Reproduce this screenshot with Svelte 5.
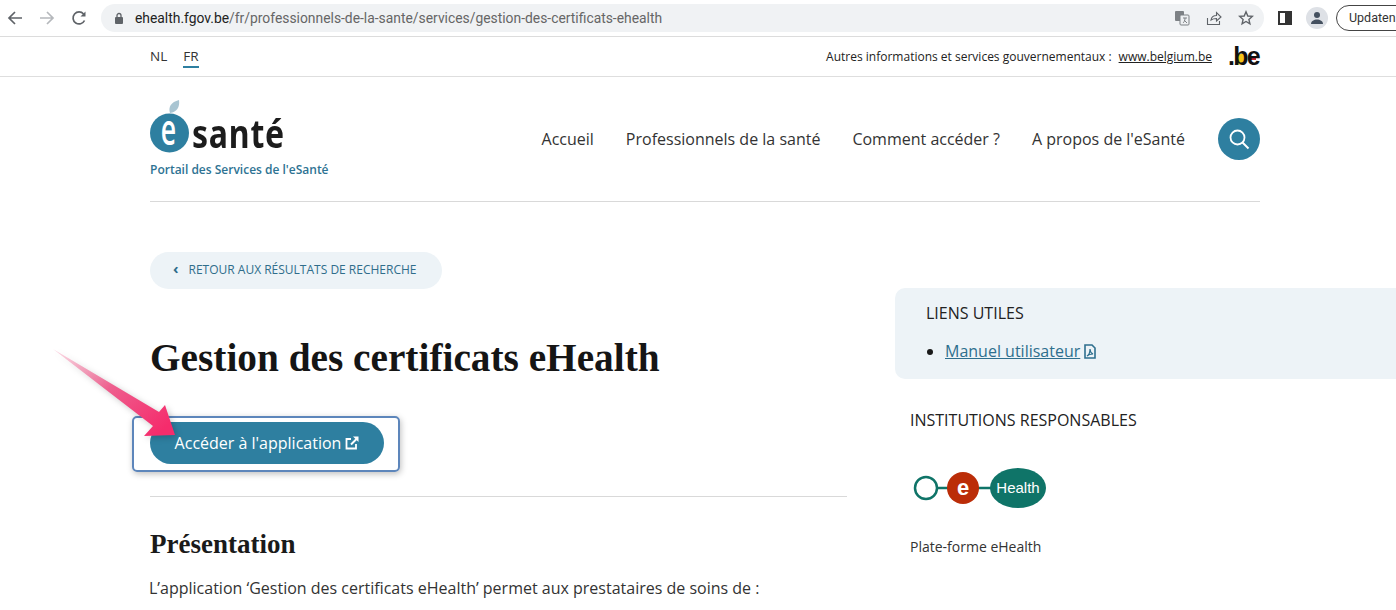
<script>
  const navItems = ["Accueil", "Professionnels de la santé", "Comment accéder ?", "A propos de l'eSanté"];
</script>

<div class="browser">
  <div class="nav-icons">
    <svg width="16" height="16" viewBox="0 0 16 16" class="ic"><path d="M15 8H2.500M8 2 2 8l6 6" fill="none" stroke="#5f6368" stroke-width="1.700"/></svg>
    <svg width="16" height="16" viewBox="0 0 16 16" class="ic"><path d="M1 8h12.500M8 2l6 6-6 6" fill="none" stroke="#b5b8bc" stroke-width="1.700"/></svg>
    <svg width="16" height="16" viewBox="0 0 16 16" class="ic"><path d="M13.500 10.500A6 6 0 1 1 12.600 4" fill="none" stroke="#5f6368" stroke-width="1.700"/><path d="M14.500 1.500v5h-5z" fill="#5f6368"/></svg>
  </div>
  <div class="omnibox">
    <svg width="10" height="12" viewBox="0 0 10 12" class="lock"><rect x="1" y="5" width="8" height="7" rx="1" fill="#5f6368"/><path d="M3 5V3.500a2 2 0 0 1 4 0V5" fill="none" stroke="#5f6368" stroke-width="1.300"/></svg>
    <span class="url"><b>ehealth.fgov.be</b>/fr/professionnels-de-la-sante/services/gestion-des-certificats-ehealth</span>
    <div class="omni-icons">
      <svg width="16" height="16" viewBox="0 0 16 16"><rect x="1" y="1" width="9" height="10" rx="1" fill="#7d8185"/><rect x="6" y="5" width="9" height="10" rx="1" fill="#eef0f2" stroke="#7d8185"/><path d="M9 8h4M11 8c0 3-1 4-2 5M10 10l3 3" stroke="#7d8185" fill="none"/></svg>
      <svg width="16" height="16" viewBox="0 0 16 16"><path d="M1.500 8v6.500h12V11M5 10c.5-3 3-4.500 5.500-4.500V2.500l4.500 4.500-4.500 4V8.500C8 8.500 6.500 9 5 10z" fill="none" stroke="#5f6368" stroke-width="1.100"/></svg>
      <svg width="16" height="16" viewBox="0 0 16 16"><path d="m8 1.800 1.800 4.200 4.500.4-3.400 3 1 4.400L8 11.500l-3.900 2.300 1-4.400-3.400-3 4.500-.4z" fill="none" stroke="#5f6368" stroke-width="1.400"/></svg>
    </div>
  </div>
  <div class="panel-ic"><span></span></div>
  <div class="avatar">
    <svg width="14" height="14" viewBox="0 0 14 14"><circle cx="7" cy="4" r="3" fill="#44505f"/><path d="M1 13c0-3 3-4.500 6-4.500s6 1.500 6 4.500z" fill="#44505f"/></svg>
  </div>
  <div class="update">Updaten</div>
</div>

<div class="topbar">
  <div class="wrap topbar-in">
    <div class="langs"><span>NL</span><span class="active">FR</span></div>
    <div class="gov">
      <span>Autres informations et services gouvernementaux :</span>
      <a href="#top">www.belgium.be</a>
      <div class="be-logo">
        <span>.</span><span class="be-b">b</span><span class="be-e">e</span>
      </div>
    </div>
  </div>
</div>

<div class="wrap">
  <header>
    <div class="brand">
      <div class="logo">
        <svg width="40" height="62" viewBox="0 0 40 62" class="logo-mark">
          <path d="M20 13c-2-6 1-11 9-13 1 7-2 12-9 13z" fill="#a9c5d2"/>
          <circle cx="19.500" cy="33" r="19.500" fill="#2e7fa0"/>
          <text transform="translate(18.500 45) scale(.62 1)" text-anchor="middle" class="logo-e">e</text>
        </svg>
        <span class="logo-text">santé</span>
      </div>
      <div class="tagline">Portail des Services de l'eSanté</div>
    </div>
    <nav>
      {#each navItems as item}
        <a href="#top">{item}</a>
      {/each}
      <div class="search">
        <svg width="22" height="22" viewBox="0 0 22 22"><circle cx="9.500" cy="9.500" r="7" fill="none" stroke="#fff" stroke-width="1.800"/><path d="m14.500 14.500 6 6" stroke="#fff" stroke-width="2"/></svg>
      </div>
    </nav>
  </header>

  <div class="columns">
    <main>
      <div class="back"><span class="chev">‹</span>RETOUR AUX RÉSULTATS DE RECHERCHE</div>
      <h1>Gestion des certificats eHealth</h1>
      <div class="focus-ring">
        <div class="cta">
          Accéder à l'application
          <svg width="14" height="14" viewBox="0 0 14 14"><path d="M11 8v4.500H1.500V3H6" fill="none" stroke="#fff" stroke-width="1.800"/><path d="M6 8.500 12 2.500" stroke="#fff" stroke-width="2"/><path d="M8 .5h5.500V6z" fill="#fff"/></svg>
        </div>
        <svg class="arrow" width="124" height="92" viewBox="0 0 124 92">
          <defs>
            <linearGradient id="arrowfill" x1="0" y1="0" x2="1" y2="0.800">
              <stop offset="0" stop-color="#f6a6c0" stop-opacity="0.400"/>
              <stop offset="0.500" stop-color="#ee5f8e"/>
              <stop offset="1" stop-color="#f52c6c"/>
            </linearGradient>
          </defs>
          <path d="M1 1 107 64 113 57 123 87 92 88 101 78z" fill="url(#arrowfill)"/>
        </svg>
      </div>
      <hr />
      <h2>Présentation</h2>
      <p>L’application ‘Gestion des certificats eHealth’ permet aux prestataires de soins de :</p>
    </main>
    <aside>
      <div class="links">
        <div class="links-title">LIENS UTILES</div>
        <ul>
          <li>
            <a href="#top">Manuel utilisateur</a>
            <svg width="12" height="15" viewBox="0 0 12 15"><path d="M1 1h7l3 3v10H1z" fill="none" stroke="#2e6f8e" stroke-width="1.600"/><path d="M3 12c2-1 3-4 3-7 0 3 1 4 3 5-2 0-4 0-6 2z" fill="none" stroke="#2e6f8e" stroke-width="1.200"/></svg>
          </li>
        </ul>
      </div>
      <div class="inst">
        <div class="inst-title">INSTITUTIONS RESPONSABLES</div>
        <svg width="136" height="44" viewBox="0 0 136 44" class="ehealth">
          <path d="M25 21h70" stroke="#0f7468" stroke-width="2.500"/>
          <circle cx="16" cy="21" r="11" fill="#fff" stroke="#0f7468" stroke-width="2.500"/>
          <circle cx="53" cy="21" r="16" fill="#bb2d08"/>
          <text x="53" y="28" text-anchor="middle" class="eh-e">e</text>
          <ellipse cx="108" cy="21" rx="28" ry="20" fill="#0f7468"/>
          <text x="108" y="26" text-anchor="middle" class="eh-h">Health</text>
        </svg>
        <div class="inst-name">Plate-forme eHealth</div>
      </div>
    </aside>
  </div>
</div>

<style>
  :global(body) {
    margin: 0;
    background: #fff;
    overflow: hidden;
    font-family: "Open Sans", sans-serif;
    color: #1a1a1a;
  }

  .browser {
    height: 36px;
    display: flex;
    align-items: center;
    border-bottom: 1px solid #dcdcdc;
    overflow: hidden;
  }

  .nav-icons {
    display: flex;
    gap: 16px;
    margin-left: 7px;
    width: 94px;
    flex: none;
  }

  .omnibox {
    width: 1163px;
    flex: none;
    height: 28px;
    border-radius: 14px;
    background: #f0f2f4;
    display: flex;
    align-items: center;
    box-sizing: border-box;
    padding-left: 13px;
  }

  .lock {
    margin-right: 11px;
  }

  .url {
    font-family: Roboto, sans-serif;
    font-size: 13.870px;
    color: #666;
    white-space: nowrap;
  }

  .url b {
    font-weight: 400;
    color: #222;
  }

  .omni-icons {
    margin-left: auto;
    display: flex;
    gap: 16px;
    padding-right: 10px;
  }

  .panel-ic {
    margin-left: 14px;
    width: 14px;
    height: 14px;
    box-sizing: border-box;
    border: 2px solid #333;
    display: flex;
    justify-content: flex-end;
    flex: none;
  }

  .panel-ic span {
    width: 5px;
    background: #333;
  }

  .avatar {
    margin-left: 14px;
    width: 22px;
    height: 22px;
    border-radius: 50%;
    background: #dee1e6;
    display: flex;
    align-items: center;
    justify-content: center;
    flex: none;
  }

  .update {
    margin-left: 8px;
    flex: none;
    height: 26px;
    width: 90px;
    box-sizing: border-box;
    border: 1px solid #444;
    border-radius: 13px;
    padding-left: 12px;
    font-family: Roboto, sans-serif;
    font-size: 12.500px;
    line-height: 24px;
    color: #333;
  }

  .topbar {
    height: 39px;
    border-bottom: 1px solid #dedede;
  }

  .wrap {
    width: 1110px;
    margin-left: 150px;
  }

  .topbar-in {
    height: 100%;
    display: flex;
    align-items: center;
    justify-content: space-between;
  }

  .langs {
    display: flex;
    gap: 16px;
    font-size: 13.500px;
    color: #333;
  }

  .langs span {
    padding: 2px 0 1px;
  }

  .langs .active {
    border-bottom: 2px solid #2e7fa0;
  }

  .gov {
    display: flex;
    align-items: center;
    font-size: 12px;
    color: #222;
  }

  .gov a {
    margin-left: 7px;
    color: #222;
  }

  .be-logo {
    margin-left: 16px;
    font-family: "Liberation Sans", sans-serif;
    font-weight: 700;
    font-size: 25px;
    line-height: 26px;
    letter-spacing: -1.700px;
    width: 32px;
    height: 28px;
    white-space: nowrap;
    color: #111;
  }

  .be-b {
    background: linear-gradient(#f5c518, #f5c518) no-repeat 60% 72% / 60% 38%;
  }

  .be-e {
    background: linear-gradient(#d2202f, #d2202f) no-repeat 50% 60% / 60% 16%;
  }

  header {
    height: 124px;
    border-bottom: 1px solid #d9d9d9;
    display: flex;
    justify-content: space-between;
  }

  .brand {
    padding-top: 15px;
  }

  .logo {
    display: flex;
    align-items: flex-start;
    height: 63px;
  }

  .logo-mark {
    margin-top: 8px;
    flex: none;
  }

  .logo-e {
    font-family: "Open Sans", sans-serif;
    font-weight: 600;
    font-size: 43px;
    fill: #fff;
  }

  .logo-text {
    font-family: "Noto Sans", sans-serif;
    font-weight: 700;
    font-size: 40px;
    line-height: 36px;
    letter-spacing: 1px;
    color: #1c1c1c;
    margin: 23px 0 0 2px;
    transform: scaleX(0.8);
    transform-origin: left;
  }

  .tagline {
    margin-top: 6px;
    font-size: 12px;
    font-weight: 600;
    color: #2e7393;
  }

  nav {
    display: flex;
    align-items: center;
    gap: 32px;
    height: 100%;
    padding-bottom: 1px;
  }

  nav a {
    font-size: 16px;
    color: #333;
    text-decoration: none;
  }

  nav a:last-of-type {
    margin-right: 1px;
  }

  .search {
    width: 42px;
    height: 42px;
    border-radius: 50%;
    background: #2e7fa0;
    display: flex;
    align-items: center;
    justify-content: center;
  }

  .columns {
    display: flex;
    gap: 48px;
    width: 1246px;
  }

  main {
    width: 697px;
    flex: none;
    padding-top: 50px;
  }

  .back {
    width: 292px;
    height: 37px;
    border-radius: 19px;
    background: #edf3f7;
    box-sizing: border-box;
    padding: 0 0 3px 23px;
    display: flex;
    align-items: center;
    font-size: 12px;
    color: #2f6d8b;
    white-space: nowrap;
  }

  .chev {
    font-weight: 700;
    font-size: 15px;
    margin-right: 10px;
    line-height: 10px;
    padding-bottom: 3px;
  }

  h1 {
    margin: 44px 0 0;
    font-family: "Liberation Serif", serif;
    font-weight: 700;
    font-size: 39.300px;
    line-height: 50px;
    color: #151515;
    white-space: nowrap;
  }

  .focus-ring {
    position: relative;
    margin: 33px 0 0 -18px;
    width: 268px;
    height: 56px;
    box-sizing: border-box;
    border: 2px solid #5d86bb;
    border-radius: 5px;
    box-shadow: 1px 2px 6px rgba(0, 0, 0, 0.25);
    padding: 4px 0 0 16px;
  }

  .cta {
    width: 234px;
    height: 42px;
    border-radius: 21px;
    background: #2e7fa0;
    color: #fff;
    font-size: 16px;
    display: flex;
    align-items: center;
    justify-content: center;
    gap: 4px;
    white-space: nowrap;
  }

  .arrow {
    position: absolute;
    left: -82px;
    top: -70px;
    filter: drop-shadow(2px 2px 3px rgba(0, 0, 0, 0.2));
    pointer-events: none;
  }

  hr {
    margin: 24px 0 0;
    border: 0;
    border-top: 1px solid #d9d9d9;
  }

  h2 {
    margin: 29px 0 0;
    font-family: "Liberation Serif", serif;
    font-weight: 700;
    font-size: 27px;
    line-height: 36px;
    color: #1a1a1a;
  }

  p {
    margin: 14px 0 0 -1px;
    font-size: 16px;
    line-height: 24px;
    color: #333;
    white-space: nowrap;
  }

  aside {
    flex: 1;
    padding-top: 86px;
  }

  .links {
    height: 91px;
    box-sizing: border-box;
    background: #edf3f7;
    border-radius: 10px 0 0 10px;
    padding: 14px 0 0 31px;
  }

  .links-title {
    font-size: 16px;
    line-height: 22px;
    color: #222;
  }

  ul {
    margin: 16px 0 0;
    padding: 0 0 0 19px;
  }

  li {
    font-size: 16px;
    line-height: 22px;
  }

  li a {
    color: #2e6f8e;
  }

  li svg {
    vertical-align: -2px;
  }

  .inst {
    padding: 30px 0 0 15px;
  }

  .inst-title {
    font-size: 16px;
    line-height: 22px;
    color: #222;
  }

  .ehealth {
    display: block;
    margin: 36px 0 0 0;
  }

  .eh-e {
    font-family: "Liberation Sans", sans-serif;
    font-weight: 700;
    font-size: 22px;
    fill: #fff;
  }

  .eh-h {
    font-family: "Liberation Sans", sans-serif;
    font-size: 15px;
    font-weight: 500;
    fill: #fff;
  }

  .inst-name {
    margin-top: 26px;
    font-size: 14px;
    line-height: 20px;
    color: #333;
  }
</style>
